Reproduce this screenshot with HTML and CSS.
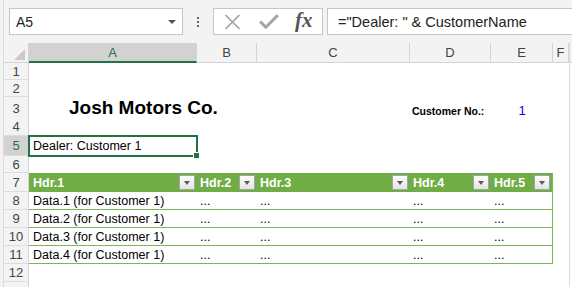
FILE: index.html
```html
<!DOCTYPE html>
<html lang="en">
<head>
  <meta charset="UTF-8">
  <title>Josh Motors Co. - Worksheet</title>
  <link rel="stylesheet" href="styles.css">
</head>
<body>
  <div class="app">
    <!-- Formula bar -->
    <div class="formula-bar">
      <div class="name-box"><span>A5</span><span class="caret"></span></div>
      <div class="grip"><i></i><i></i><i></i></div>
      <div class="fx-box">
        <svg class="icon-cancel" width="17" height="16" viewBox="0 0 17 16">
          <path d="M1.5 1 L15.5 15 M15.5 1 L1.5 15" stroke="#a3a3a3" stroke-width="1.7" fill="none"/>
        </svg>
        <svg class="icon-enter" width="20" height="15" viewBox="0 0 20 15">
          <path d="M1.2 7.5 L6.8 13.2 L18.8 1.2" stroke="#a3a3a3" stroke-width="3" fill="none"/>
        </svg>
        <span class="fx">fx</span>
      </div>
      <div class="formula">="Dealer: " &amp; CustomerName</div>
    </div>

    <!-- Sheet -->
    <div class="sheet">
      <div class="row col-head">
        <div class="corner"><span class="tri"></span></div>
        <div class="ch sel">A</div>
        <div class="ch">B</div>
        <div class="ch">C</div>
        <div class="ch">D</div>
        <div class="ch">E</div>
        <div class="ch">F</div>
        <div class="ch edge"></div>
      </div>

      <div class="row h17">
        <div class="rh">1</div>
        <div></div><div></div><div></div><div></div><div></div><div></div><div class="edge"></div>
      </div>
      <div class="row h17">
        <div class="rh">2</div>
        <div></div><div></div><div></div><div></div><div></div><div></div><div class="edge"></div>
      </div>
      <div class="row h21 bottom">
        <div class="rh">3</div>
        <div class="c title">Josh Motors Co.</div>
        <div></div><div></div>
        <div class="c cust-label">Customer No.:</div>
        <div class="c cust-no">1</div>
        <div></div><div class="edge"></div>
      </div>
      <div class="row">
        <div class="rh">4</div>
        <div></div><div></div><div></div><div></div><div></div><div></div><div class="edge"></div>
      </div>
      <div class="row h20">
        <div class="rh sel">5</div>
        <div class="c ca active">Dealer: Customer 1</div>
        <div></div><div></div><div></div><div></div><div></div><div class="edge"></div>
      </div>
      <div class="row h17">
        <div class="rh">6</div>
        <div></div><div></div><div></div><div></div><div></div><div></div><div class="edge"></div>
      </div>

      <!-- Table -->
      <div class="row h19">
        <div class="rh">7</div>
        <div class="th ca"><span>Hdr.1</span><span class="filter"></span></div>
        <div class="th"><span>Hdr.2</span><span class="filter"></span></div>
        <div class="th"><span>Hdr.3</span><span class="filter"></span></div>
        <div class="th"><span>Hdr.4</span><span class="filter"></span></div>
        <div class="th last"><span>Hdr.5</span><span class="filter"></span></div>
        <div></div><div class="edge"></div>
      </div>
      <div class="row">
        <div class="rh">8</div>
        <div class="td ca">Data.1 (for Customer 1)</div>
        <div class="td">...</div><div class="td">...</div><div class="td">...</div><div class="td last">...</div>
        <div></div><div class="edge"></div>
      </div>
      <div class="row">
        <div class="rh">9</div>
        <div class="td ca">Data.2 (for Customer 1)</div>
        <div class="td">...</div><div class="td">...</div><div class="td">...</div><div class="td last">...</div>
        <div></div><div class="edge"></div>
      </div>
      <div class="row">
        <div class="rh">10</div>
        <div class="td ca">Data.3 (for Customer 1)</div>
        <div class="td">...</div><div class="td">...</div><div class="td">...</div><div class="td last">...</div>
        <div></div><div class="edge"></div>
      </div>
      <div class="row">
        <div class="rh">11</div>
        <div class="td ca">Data.4 (for Customer 1)</div>
        <div class="td">...</div><div class="td">...</div><div class="td">...</div><div class="td last">...</div>
        <div></div><div class="edge"></div>
      </div>
      <div class="row">
        <div class="rh">12</div>
        <div></div><div></div><div></div><div></div><div></div><div></div><div class="edge"></div>
      </div>
      <div class="row">
        <div class="rh"></div>
        <div></div><div></div><div></div><div></div><div></div><div></div><div class="edge"></div>
      </div>
    </div>
  </div>
</body>
</html>
```

FILE: styles.css
```css
body {
  margin: 0;
  height: 287px;
  overflow: hidden;
  background: #f3f3f3;
  font-family: "Liberation Sans", Arial, sans-serif;
  color: #000;
}
.app {
  margin-left: 3px;
  border-left: 1px solid #dadada;
}

/* Formula bar */
.formula-bar {
  display: flex;
  align-items: center;
  height: 43px;
  padding-left: 5px;
  box-sizing: border-box;
}
.name-box {
  width: 174px;
  height: 27px;
  box-sizing: border-box;
  border: 1px solid #c6c6c6;
  background: #fff;
  display: flex;
  align-items: center;
  justify-content: space-between;
  padding: 0 6px;
  font-size: 14px;
  color: #222;
}
.caret {
  width: 0;
  height: 0;
  border-left: 4px solid transparent;
  border-right: 4px solid transparent;
  border-top: 4px solid #555;
}
.grip {
  display: flex;
  flex-direction: column;
  gap: 2px;
  margin-left: 14px;
}
.grip i {
  display: block;
  width: 2px;
  height: 2px;
  background: #666;
}
.fx-box {
  display: flex;
  align-items: center;
  width: 110px;
  height: 27px;
  box-sizing: border-box;
  margin-left: 14px;
  border: 1px solid #c6c6c6;
  background: #fff;
}
.icon-cancel {
  margin-left: 10px;
}
.icon-enter {
  margin-left: 18px;
}
.fx {
  margin-left: 16px;
  font-family: "Liberation Serif", "DejaVu Serif", serif;
  font-style: italic;
  font-weight: bold;
  font-size: 21px;
  color: #555;
  line-height: 1;
  margin-top: -3px;
}
.formula {
  flex: 1;
  height: 27px;
  box-sizing: border-box;
  margin-left: 4px;
  border: 1px solid #c6c6c6;
  border-right: none;
  background: #fff;
  padding-left: 10px;
  display: flex;
  align-items: center;
  font-size: 14.5px;
  color: #222;
  white-space: nowrap;
}

/* Sheet grid */
.sheet {
  background: #fff;
}
.row {
  display: grid;
  grid-template-columns: 25px 168px 60px 153px 81px 62px 16px 1fr;
  height: 18px;
}
.h17 { height: 17px; }
.h19 { height: 19px; }
.h20 { height: 20px; }
.h21 { height: 21px; }
.col-head {
  height: 20px;
  background: #f3f3f3;
}
.corner {
  display: flex;
  justify-content: flex-end;
  align-items: flex-end;
  padding: 0 3px 2px 0;
  border-right: 1px solid #d4d4d4;
  border-bottom: 1px solid #d4d4d4;
}
.tri {
  width: 0;
  height: 0;
  border-left: 11px solid transparent;
  border-bottom: 11px solid #c9c9c9;
}
.ch {
  display: flex;
  align-items: center;
  justify-content: center;
  font-size: 13px;
  color: #444;
  border-right: 1px solid #d4d4d4;
  border-bottom: 1px solid #d4d4d4;
}
.ch.sel {
  background: #d2d2d2;
  color: #217346;
  border-bottom: 2px solid #217346;
}
.ch.edge {
  border-right: none;
}
.edge {
  border-left: 1px solid #dcdcdc;
}
.rh {
  display: flex;
  align-items: center;
  justify-content: center;
  background: #f3f3f3;
  font-size: 13px;
  color: #444;
  border-right: 1px solid #d4d4d4;
  border-bottom: 1px solid #dcdcdc;
}
.rh.sel {
  background: #d2d2d2;
  color: #217346;
}

/* Cells */
.c, .td, .th {
  display: flex;
  align-items: center;
  padding-left: 3px;
  font-size: 12.5px;
  white-space: nowrap;
}
.ca {
  padding-left: 4px;
}
.bottom .c {
  align-items: flex-end;
}
.title {
  padding-left: 40px;
  padding-bottom: 2px;
  font-size: 19px;
  font-weight: bold;
}
.cust-label {
  padding-left: 2px;
  padding-bottom: 4px;
  font-size: 10.5px;
  font-weight: bold;
}
.cust-no {
  justify-content: center;
  padding-left: 0;
  padding-bottom: 3px;
  font-size: 13px;
  color: #0000ff;
}
.active {
  position: relative;
}
.active::before {
  content: "";
  position: absolute;
  top: -1px;
  left: -1px;
  right: -1px;
  bottom: -1px;
  border: 2px solid #217346;
}
.active::after {
  content: "";
  position: absolute;
  right: -3px;
  bottom: -3px;
  width: 5px;
  height: 5px;
  background: #217346;
  border: 1px solid #fff;
}

/* Table */
.th {
  justify-content: space-between;
  background: #70ad47;
  color: #fff;
  font-weight: bold;
}
.filter {
  width: 16px;
  height: 15px;
  box-sizing: border-box;
  margin-right: 2px;
  border: 1px solid #a3a3a3;
  background: linear-gradient(#fdfdfd, #e4e4e4);
  display: flex;
  align-items: center;
  justify-content: center;
}
.filter::after {
  content: "";
  width: 0;
  height: 0;
  border-left: 3.5px solid transparent;
  border-right: 3.5px solid transparent;
  border-top: 4px solid #5a5a5a;
}
.td {
  border-bottom: 1px solid #7fb55a;
}
.last {
  border-right: 1px solid #7fb55a;
}
```
